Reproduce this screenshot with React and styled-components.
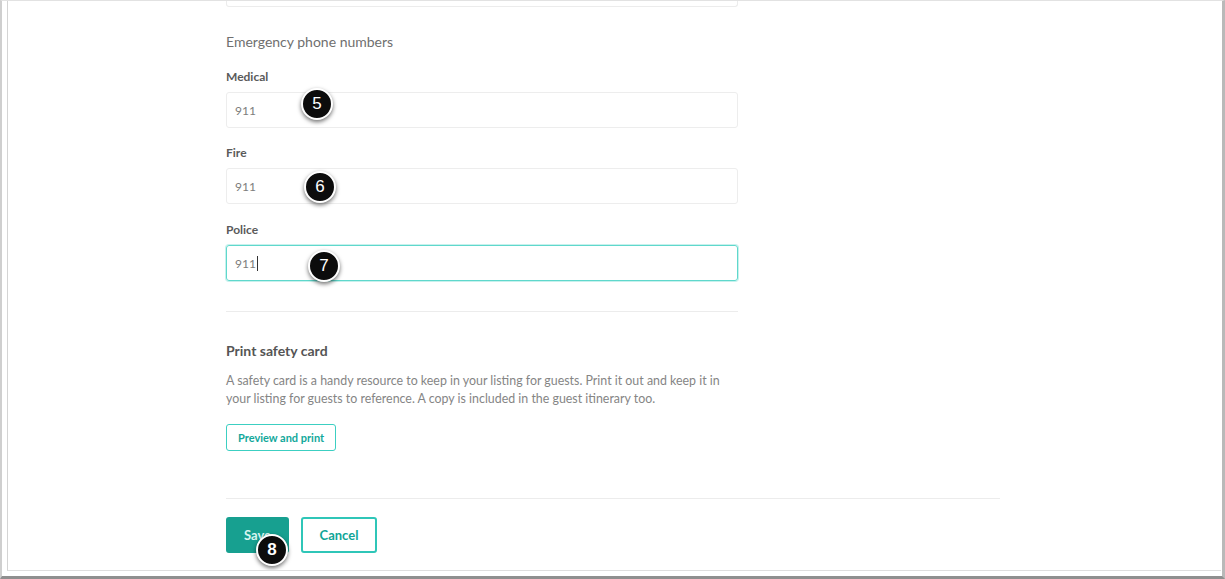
import React from "react";
import styled, { createGlobalStyle } from "styled-components";

const Global = createGlobalStyle`
  html, body { margin: 0; padding: 0; background: #ffffff; }
  body { font-family: Lato, "Open Sans", sans-serif; }
  * { box-sizing: border-box; }
`;

const Window = styled.div`
  width: 1225px;
  height: 579px;
  border-top: 1px solid #e2e2e2;
  border-left: 2px solid #cfcfcf;
  border-right: 3px solid #b9b9b9;
  border-bottom: 3px solid #8f8f8f;
  padding: 0 1px 5px 5px;
  display: flex;
  background: #fff;
`;

const Pane = styled.div`
  flex: 1;
  border-left: 1px solid #d4d4d4;
  border-bottom: 1px solid #dedede;
  padding-left: 218px;
  display: flex;
  flex-direction: column;
  overflow: hidden;
`;

const Column = styled.div`
  width: 512px;
  display: flex;
  flex-direction: column;
`;

const PrevBox = styled.div`
  height: 6px;
  border: 1px solid #ececec;
  border-top: none;
  border-radius: 0 0 3px 3px;
`;

const SectionTitle = styled.div`
  margin-top: 25px;
  font-size: 14px;
  line-height: 20px;
  color: #6f6f6f;
  font-weight: 400;
`;

const Field = styled.div`
  display: flex;
  flex-direction: column;
  margin-top: ${(p) => p.$top}px;
`;

const Label = styled.div`
  font-size: 12px;
  line-height: 16px;
  font-weight: 700;
  color: #5a5a5a;
  margin-bottom: 7px;
`;

const InputBox = styled.div`
  position: relative;
  height: 36px;
  border: 1px solid ${(p) => (p.$focused ? "#5fd8cc" : "#ededed")};
  border-radius: 3px;
  padding-left: 8px;
  display: flex;
  align-items: center;
  font-size: 12px;
  color: #7d7d7d;
  box-shadow: ${(p) => (p.$focused ? "0 0 0 1px rgba(95,216,204,0.35)" : "none")};
`;

const Caret = styled.span`
  display: inline-block;
  width: 1px;
  height: 15px;
  background: #333;
  margin-left: 1px;
`;

const Badge = styled.div`
  position: absolute;
  width: 32px;
  height: 32px;
  border-radius: 50%;
  background: #0c0c0c;
  border: 2px solid #ffffff;
  box-shadow: 0 2px 4px rgba(0, 0, 0, 0.55);
  color: #fff;
  font-family: "Liberation Sans", Arial, sans-serif;
  font-size: 17px;
  display: flex;
  align-items: center;
  justify-content: center;
  transform: translate(-50%, -50%);
  z-index: 2;
`;

const Divider = styled.div`
  height: 1px;
  background: #ececec;
  width: ${(p) => p.$w}px;
  margin-top: ${(p) => p.$top}px;
`;

const CardTitle = styled.div`
  margin-top: 29px;
  font-size: 14px;
  line-height: 20px;
  font-weight: 700;
  color: #555;
`;

const Para = styled.p`
  margin: 11px 0 0;
  font-size: 12.4px;
  line-height: 18px;
  color: #858585;
`;

const OutlineButton = styled.button`
  align-self: flex-start;
  margin-top: 16px;
  height: 27px;
  padding: 0 11px;
  background: #fff;
  border: 1.5px solid #3ccfc2;
  border-radius: 3px;
  color: #12a89b;
  font-family: Lato, sans-serif;
  font-weight: 700;
  font-size: 11px;
`;

const Actions = styled.div`
  display: flex;
  gap: 12px;
  margin-top: 18px;
`;

const ActionButton = styled.button`
  position: relative;
  height: 36px;
  width: ${(p) => p.$w}px;
  border-radius: 3px;
  font-family: Lato, sans-serif;
  font-weight: 700;
  font-size: 13px;
  background: ${(p) => (p.$primary ? "#17a090" : "#fff")};
  color: ${(p) => (p.$primary ? "#d9f5f1" : "#0fa597")};
  border: 2px solid ${(p) => (p.$primary ? "#17a090" : "#2fc6b8")};
  padding: 0;
`;

function PhoneField({ label, top, badge, bx, by, focused }) {
  return (
    <Field $top={top}>
      <Label>{label}</Label>
      <InputBox $focused={focused}>
        911
        {focused && <Caret />}
        <Badge style={{ left: bx, top: by }}>{badge}</Badge>
      </InputBox>
    </Field>
  );
}

export default function App() {
  return (
    <>
      <Global />
      <Window>
        <Pane>
          <Column>
            <PrevBox />
            <SectionTitle>Emergency phone numbers</SectionTitle>
            <PhoneField label="Medical" top={17} badge="5" bx={90} by={11} />
            <PhoneField label="Fire" top={17} badge="6" bx={93} by={18} />
            <PhoneField label="Police" top={18} badge="7" bx={97} by={20} focused />
            <Divider $w={512} $top={30} />
            <CardTitle>Print safety card</CardTitle>
            <Para>
              A safety card is a handy resource to keep in your listing for guests. Print it out and keep it in
              <br />
              your listing for guests to reference. A copy is included in the guest itinerary too.
            </Para>
            <OutlineButton>Preview and print</OutlineButton>
          </Column>
          <Divider $w={774} $top={47} />
          <Actions>
            <ActionButton $primary $w={63}>
              Save
              <Badge style={{ left: 44, top: 31 }}>8</Badge>
            </ActionButton>
            <ActionButton $w={76}>Cancel</ActionButton>
          </Actions>
        </Pane>
      </Window>
    </>
  );
}
